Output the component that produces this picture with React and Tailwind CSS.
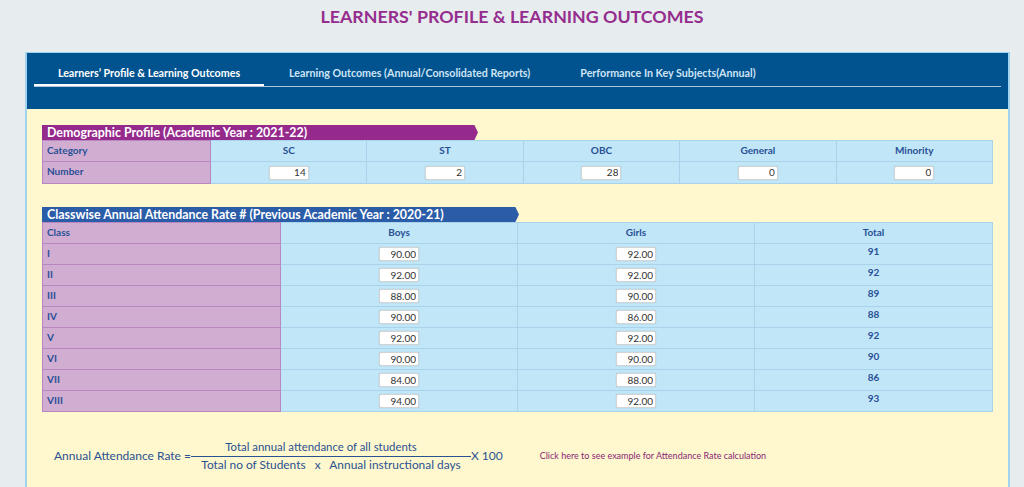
import React from 'react';

const demo = [
  { label: 'SC', value: '14' },
  { label: 'ST', value: '2' },
  { label: 'OBC', value: '28' },
  { label: 'General', value: '0' },
  { label: 'Minority', value: '0' },
];

const attendance = [
  { cls: 'I', boys: '90.00', girls: '92.00', total: '91' },
  { cls: 'II', boys: '92.00', girls: '92.00', total: '92' },
  { cls: 'III', boys: '88.00', girls: '90.00', total: '89' },
  { cls: 'IV', boys: '90.00', girls: '86.00', total: '88' },
  { cls: 'V', boys: '92.00', girls: '92.00', total: '92' },
  { cls: 'VI', boys: '90.00', girls: '90.00', total: '90' },
  { cls: 'VII', boys: '84.00', girls: '88.00', total: '86' },
  { cls: 'VIII', boys: '94.00', girls: '92.00', total: '93' },
];

const tabs = [
  'Learners’ Profile & Learning Outcomes',
  'Learning Outcomes (Annual/Consolidated Reports)',
  'Performance In Key Subjects(Annual)',
];

const font = { fontFamily: 'Lato, "Open Sans", sans-serif' };

// ribbon heading with the little arrow tip on the right
const Ribbon = ({ children, color, width }) => (
  <div className={`flex h-[15px] ${width}`}>
    <div className={`flex-1 ${color} text-white font-bold text-[12.4px] leading-[15px] pl-[5px] whitespace-nowrap`}>
      {children}
    </div>
    <div
      className={`w-[6px] h-full ${color}`}
      style={{ clipPath: 'polygon(0 0, 40% 0, 100% 50%, 40% 100%, 0 100%)' }}
    />
  </div>
);

const NumBox = ({ value }) => (
  <input
    readOnly
    value={value}
    className="w-[40px] h-[14px] bg-white border border-[#d4d4d4] rounded-[2px] text-right pr-[2px] text-[10px] font-normal text-[#333] outline-none shadow-[0_0_1px_rgba(0,0,0,0.25)]"
  />
);

const purple = 'bg-[#d1aed1] border border-[#b887c0] pl-[4px] pb-[2px]';
const blue = 'bg-[#c0e6f8] border border-[#a9d3ea]';

const App = () => {
  return (
    <div className="min-h-screen w-full bg-[#e7ecef] text-[#2a4f95]" style={font}>
      {/* Title */}
      <h1 className="text-center text-[17.8px] font-bold text-[#952d8e] pt-[4px] h-[52px] leading-[24px]">
        LEARNERS' PROFILE &amp; LEARNING OUTCOMES
      </h1>

      <div className="ml-[25px] w-[985px] border-x-2 border-t border-[#9fd3ee] bg-[#fff8cf] h-[435px]">
        {/* Tabs */}
        <div className="bg-[#00538f] h-[56px] pl-[7px] pr-[7px] pt-[12px]">
          <div className="flex border-b border-[#a9c4dc] h-[22px]">
            {tabs.map((t, i) => (
              <div
                key={t}
                className={`text-[10.7px] font-bold whitespace-nowrap leading-[15px] ${
                  i === 0 ? 'text-white border-b-2 border-white w-[230px] text-center' : 'text-[#cfe3f5] px-[25px]'
                }`}
              >
                {t}
              </div>
            ))}
          </div>
        </div>

        <div className="pl-[15px] pt-[16px]">
          {/* Demographic profile */}
          <Ribbon color="bg-[#952a8c]" width="w-[436px]">Demographic Profile (Academic Year : 2021-22)</Ribbon>
          <table className="border-collapse text-[10px] font-bold table-fixed w-[951px]">
            <tbody>
              <tr className="h-[21px]">
                <td className={`w-[168px] ${purple}`}>Category</td>
                {demo.map((d) => (
                  <td key={d.label} className={`${blue} text-center pb-[2px]`}>{d.label}</td>
                ))}
              </tr>
              <tr className="h-[22px]">
                <td className={purple}>Number</td>
                {demo.map((d) => (
                  <td key={d.label} className={`${blue} align-middle`}>
                    <div className="flex justify-center"><NumBox value={d.value} /></div>
                  </td>
                ))}
              </tr>
            </tbody>
          </table>

          {/* Attendance */}
          <div className="mt-[23px]">
            <Ribbon color="bg-[#2b5ca8]" width="w-[477px]">Classwise Annual Attendance Rate # (Previous Academic Year : 2020-21)</Ribbon>
          </div>
          <table className="border-collapse text-[10px] font-bold table-fixed w-[951px]">
            <tbody>
              <tr className="h-[21px]">
                <td className={`w-[238px] ${purple}`}>Class</td>
                <td className={`w-[237px] ${blue} text-center pb-[2px]`}>Boys</td>
                <td className={`w-[237px] ${blue} text-center pb-[2px]`}>Girls</td>
                <td className={`${blue} text-center pb-[2px]`}>Total</td>
              </tr>
              {attendance.map((r) => (
                <tr key={r.cls} className="h-[21px]">
                  <td className={purple}>{r.cls}</td>
                  <td className={blue}>
                    <div className="flex justify-center"><NumBox value={r.boys} /></div>
                  </td>
                  <td className={blue}>
                    <div className="flex justify-center"><NumBox value={r.girls} /></div>
                  </td>
                  <td className={`${blue} text-center pb-[5px]`}>{r.total}</td>
                </tr>
              ))}
            </tbody>
          </table>

          {/* Formula */}
          <div className="flex items-center mt-[27px] pl-[12px] text-[#2a5191] text-[12px]">
            <span className="whitespace-nowrap">Annual Attendance Rate =</span>
            <div className="flex flex-col items-stretch w-[280px]">
              <div className="text-center leading-[16px] text-[11.4px] pb-[1px] pr-[20px]">Total annual attendance of all students</div>
              <div className="border-t border-[#2a5191]" />
              <div className="text-center leading-[16px] text-[11.9px] whitespace-pre">Total no of Students   x   Annual instructional days</div>
            </div>
            <span className="whitespace-nowrap">X 100</span>
            <a className="ml-[37px] text-[9px] text-[#8a1f73] cursor-pointer">
              Click here to see example for Attendance Rate calculation
            </a>
          </div>
        </div>
      </div>
    </div>
  );
};

export default App;
